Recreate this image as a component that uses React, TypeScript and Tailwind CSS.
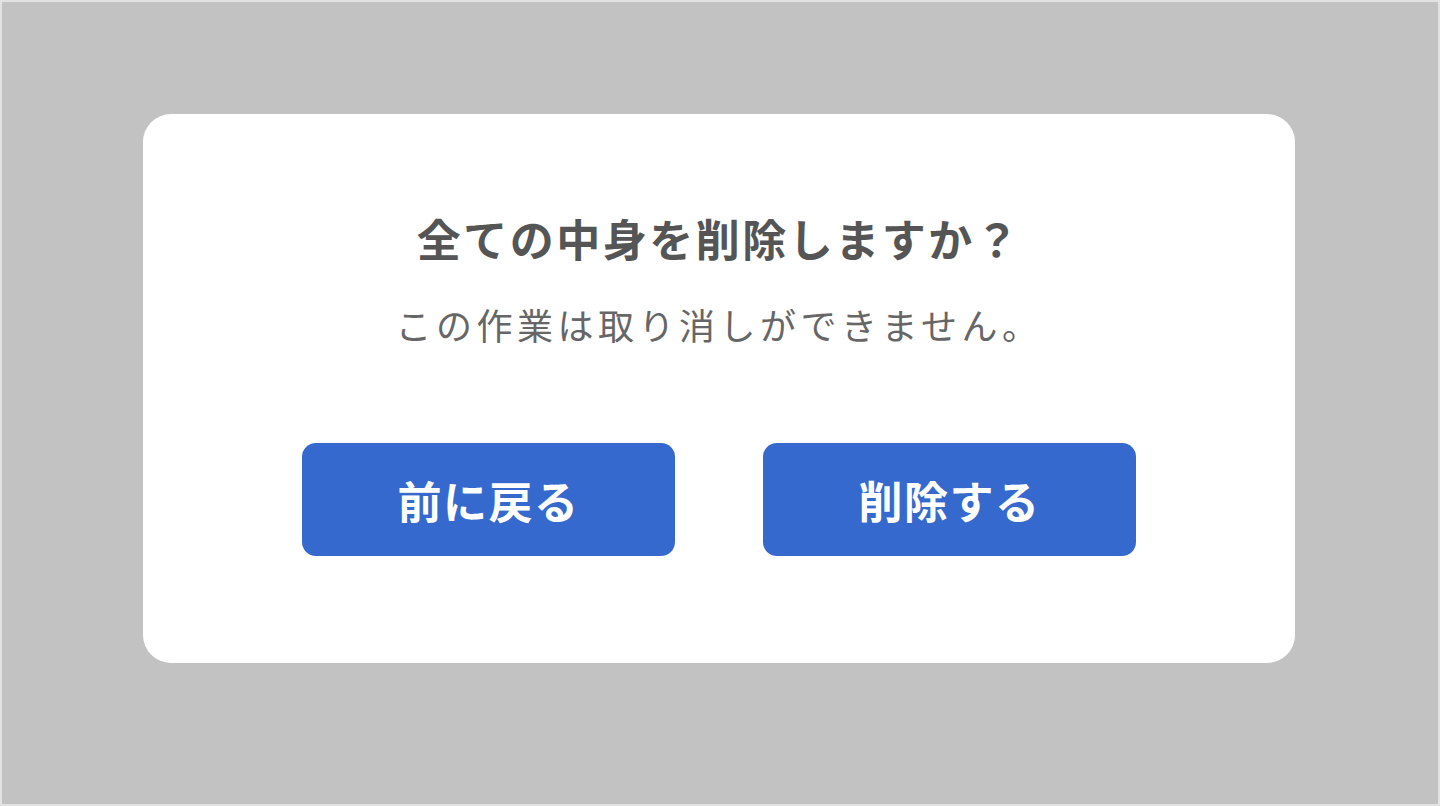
import React from "react";

export default function App() {
  return (
    <div
      className="w-[1440px] h-[806px] border-2 border-[#e2e2e2] bg-[#c2c2c2] pt-[112px] pl-[141px]"
      style={{ fontFamily: '"Noto Sans CJK JP", "Noto Sans", sans-serif' }}
    >
      <div className="w-[1152px] h-[549px] rounded-[28px] bg-white flex flex-col items-center pt-[92px]">
        <h1 className="h-[64px] leading-[64px] text-[44px] font-bold tracking-[2.5px] text-[#555555]">
          全ての中身を削除しますか？
        </h1>
        <p className="mt-[28px] h-[52px] leading-[52px] text-[36px] tracking-[4.5px] text-[#666666]">
          この作業は取り消しができません。
        </p>
        <div className="mt-[93px] flex gap-[88px]">
          <button className="w-[373px] h-[113px] rounded-[14px] bg-[#3569cd] text-white text-[44px] font-bold tracking-[1.5px]">
            前に戻る
          </button>
          <button className="w-[373px] h-[113px] rounded-[14px] bg-[#3569cd] text-white text-[44px] font-bold tracking-[1.5px]">
            削除する
          </button>
        </div>
      </div>
    </div>
  );
}
